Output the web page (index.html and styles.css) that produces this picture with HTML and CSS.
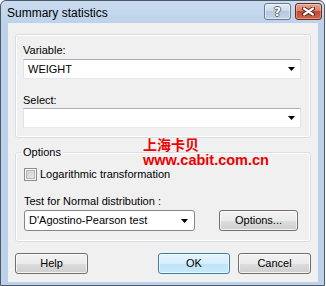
FILE: index.html
```html
<!DOCTYPE html>
<html lang="en">
<head>
    <meta charset="UTF-8">
    <title>Summary statistics</title>
    <link rel="stylesheet" href="styles.css">
</head>
<body>
    <div class="window">
        <div class="titlebar">
            <span class="title">Summary statistics</span>
            <div class="caption-buttons">
                <div class="cap-btn help-btn"><span>?</span></div>
                <div class="cap-btn close-btn">
                    <svg width="13" height="9" viewBox="0 0 13 9">
                        <path d="M2 1.5L11 7.5M11 1.5L2 7.5" stroke="#4a2018" stroke-width="4" stroke-linecap="round"/>
                        <path d="M2 1.5L11 7.5M11 1.5L2 7.5" stroke="#fff" stroke-width="2.2" stroke-linecap="round"/>
                    </svg>
                </div>
            </div>
        </div>
        <div class="client">
            <div class="group group-vars">
                <div class="field-label">Variable:</div>
                <div class="combo">
                    <span class="combo-text">WEIGHT</span>
                    <svg class="arrow" width="7" height="4" viewBox="0 0 7 4"><path d="M0 0H7L3.5 4Z" fill="#000"/></svg>
                </div>
                <div class="field-label second">Select:</div>
                <div class="combo">
                    <span class="combo-text"></span>
                    <svg class="arrow" width="7" height="4" viewBox="0 0 7 4"><path d="M0 0H7L3.5 4Z" fill="#000"/></svg>
                </div>
            </div>
            <fieldset class="group group-options">
                <legend>Options</legend>
                <div class="check-row">
                    <span class="checkbox"></span>
                    <span>Logarithmic transformation</span>
                </div>
                <div class="field-label test-label">Test for Normal distribution :</div>
                <div class="test-row">
                    <div class="combo combo-list">
                        <span class="combo-text">D'Agostino-Pearson test</span>
                        <svg class="arrow" width="7" height="4" viewBox="0 0 7 4"><path d="M0 0H7L3.5 4Z" fill="#000"/></svg>
                    </div>
                    <div class="btn options-btn">Options...</div>
                </div>
            </fieldset>
            <div class="dialog-buttons">
                <div class="btn">Help</div>
                <div class="spacer"></div>
                <div class="btn default-btn">OK</div>
                <div class="btn">Cancel</div>
            </div>
            <div class="watermark">
                <div class="wm-cn">上海卡贝</div>
                <div class="wm-url">www.cabit.com.cn</div>
            </div>
        </div>
    </div>
</body>
</html>
```

FILE: styles.css
```css
:root {
    --frame: #bcd2ea;
    --client-bg: #f0f0f0;
    --group-border: #d5dfe5;
    --btn-border: #707070;
    --text: #000;
}

body {
    margin: 0;
    background: #fff;
    font-family: 'Liberation Sans', Arial, sans-serif;
    font-size: 11px;
    color: var(--text);
}

.window {
    width: 325px;
    height: 286px;
    box-sizing: border-box;
    border: 1px solid #4e5a68;
    border-radius: 6px 6px 0 0;
    background: linear-gradient(#cadcf0, var(--frame) 24px, var(--frame));
    display: flex;
    flex-direction: column;
}

.titlebar {
    height: 22px;
    display: flex;
    justify-content: space-between;
    align-items: flex-start;
    padding-left: 6px;
}

.title {
    font-size: 12px;
    line-height: 14px;
    margin-top: 5px;
}

.caption-buttons {
    display: flex;
    gap: 4px;
    margin-top: 2px;
    margin-right: 2px;
}

.cap-btn {
    width: 27px;
    height: 17px;
    box-sizing: border-box;
    border: 1px solid #6b7a8d;
    border-radius: 3px;
    display: flex;
    justify-content: center;
    align-items: center;
}

.help-btn {
    background: linear-gradient(#e4ecf5, #c9d8e9 50%, #b6c9df 50%, #c3d4e7);
    box-shadow: inset 0 0 0 1px rgba(255, 255, 255, 0.5);
}

.help-btn span {
    font-family: 'DejaVu Sans', sans-serif;
    font-weight: bold;
    font-size: 12px;
    line-height: 12px;
    color: #fff;
    text-shadow: 1px 0 0 #5b6572, -1px 0 0 #5b6572, 0 1px 0 #5b6572, 0 -1px 0 #5b6572;
}

.close-btn {
    border-color: #6a2b20;
    background: linear-gradient(#e9a594, #d77b63 50%, #c5472d 50%, #d0674f);
    box-shadow: inset 0 0 0 1px rgba(255, 255, 255, 0.3);
}

.client {
    position: relative;
    flex: 1;
    margin: 0 6px 3px 7px;
    background: var(--client-bg);
    padding: 11px 7px 0 7px;
}

.group {
    border: 1px solid var(--group-border);
    border-radius: 3px;
    box-shadow: inset 0 0 0 1px #fff;
}

.group-vars {
    padding: 9px 9px 9px 7px;
}

.field-label {
    line-height: 13px;
    margin-bottom: 2px;
}

.field-label.second {
    margin-top: 15px;
    margin-bottom: 1px;
}

.combo {
    height: 20px;
    box-sizing: border-box;
    background: #fff;
    border: 1px solid #e2e3ea;
    border-top-color: #abadb3;
    border-bottom-color: #e3e9ef;
    display: flex;
    align-items: center;
    justify-content: space-between;
    padding: 0 5px 0 4px;
}

.combo-text {
    line-height: 13px;
}

.group-options {
    margin: 8px 0 0 0;
    padding: 9px 12px 10px 8px;
    min-inline-size: 0;
}

.group-options legend {
    padding: 0 2px;
    margin-left: -3px;
    line-height: 13px;
}

.check-row {
    display: flex;
    align-items: center;
    gap: 3px;
    line-height: 13px;
}

.checkbox {
    width: 13px;
    height: 13px;
    box-sizing: border-box;
    border: 1px solid #8e8f8f;
    background: linear-gradient(135deg, #c6c9cd, #eef0f2);
    box-shadow: inset 0 0 0 1px #f4f4f4, inset 0 0 0 2px #b4b8bd;
}

.test-label {
    margin-top: 14px;
}

.test-row {
    display: flex;
    justify-content: space-between;
    align-items: center;
}

.combo-list {
    width: 171px;
    height: 21px;
    border: 1px solid #868686;
    border-radius: 3px;
    padding: 0 6px 0 4px;
}

.btn {
    height: 21px;
    box-sizing: border-box;
    border: 1px solid var(--btn-border);
    border-radius: 3px;
    background: linear-gradient(#f2f2f2, #ebebeb 50%, #dddddd 50%, #cfcfcf);
    box-shadow: inset 0 0 0 1px rgba(255, 255, 255, 0.7);
    display: flex;
    justify-content: center;
    align-items: center;
    line-height: 13px;
}

.options-btn {
    width: 79px;
    margin-top: -1px;
}

.dialog-buttons {
    display: flex;
    gap: 8px;
    margin-top: 11px;
}

.dialog-buttons .btn {
    width: 73px;
}

.dialog-buttons .default-btn {
    width: 72px;
}

.spacer {
    flex: 1;
}

.default-btn {
    border-color: #3c7fb1;
    background: linear-gradient(#e5f4fc, #d6eefb 50%, #bfe4f7 50%, #c9e9f9);
    box-shadow: inset 0 0 0 1px rgba(255, 255, 255, 0.6);
}

.watermark {
    position: absolute;
    left: 135px;
    top: 113px;
    color: #ee0000;
    font-weight: bold;
}

.wm-cn {
    font-family: 'Noto Sans CJK SC', sans-serif;
    font-size: 14px;
    line-height: 16px;
}

.wm-url {
    font-size: 14.5px;
    line-height: 17px;
}
```
